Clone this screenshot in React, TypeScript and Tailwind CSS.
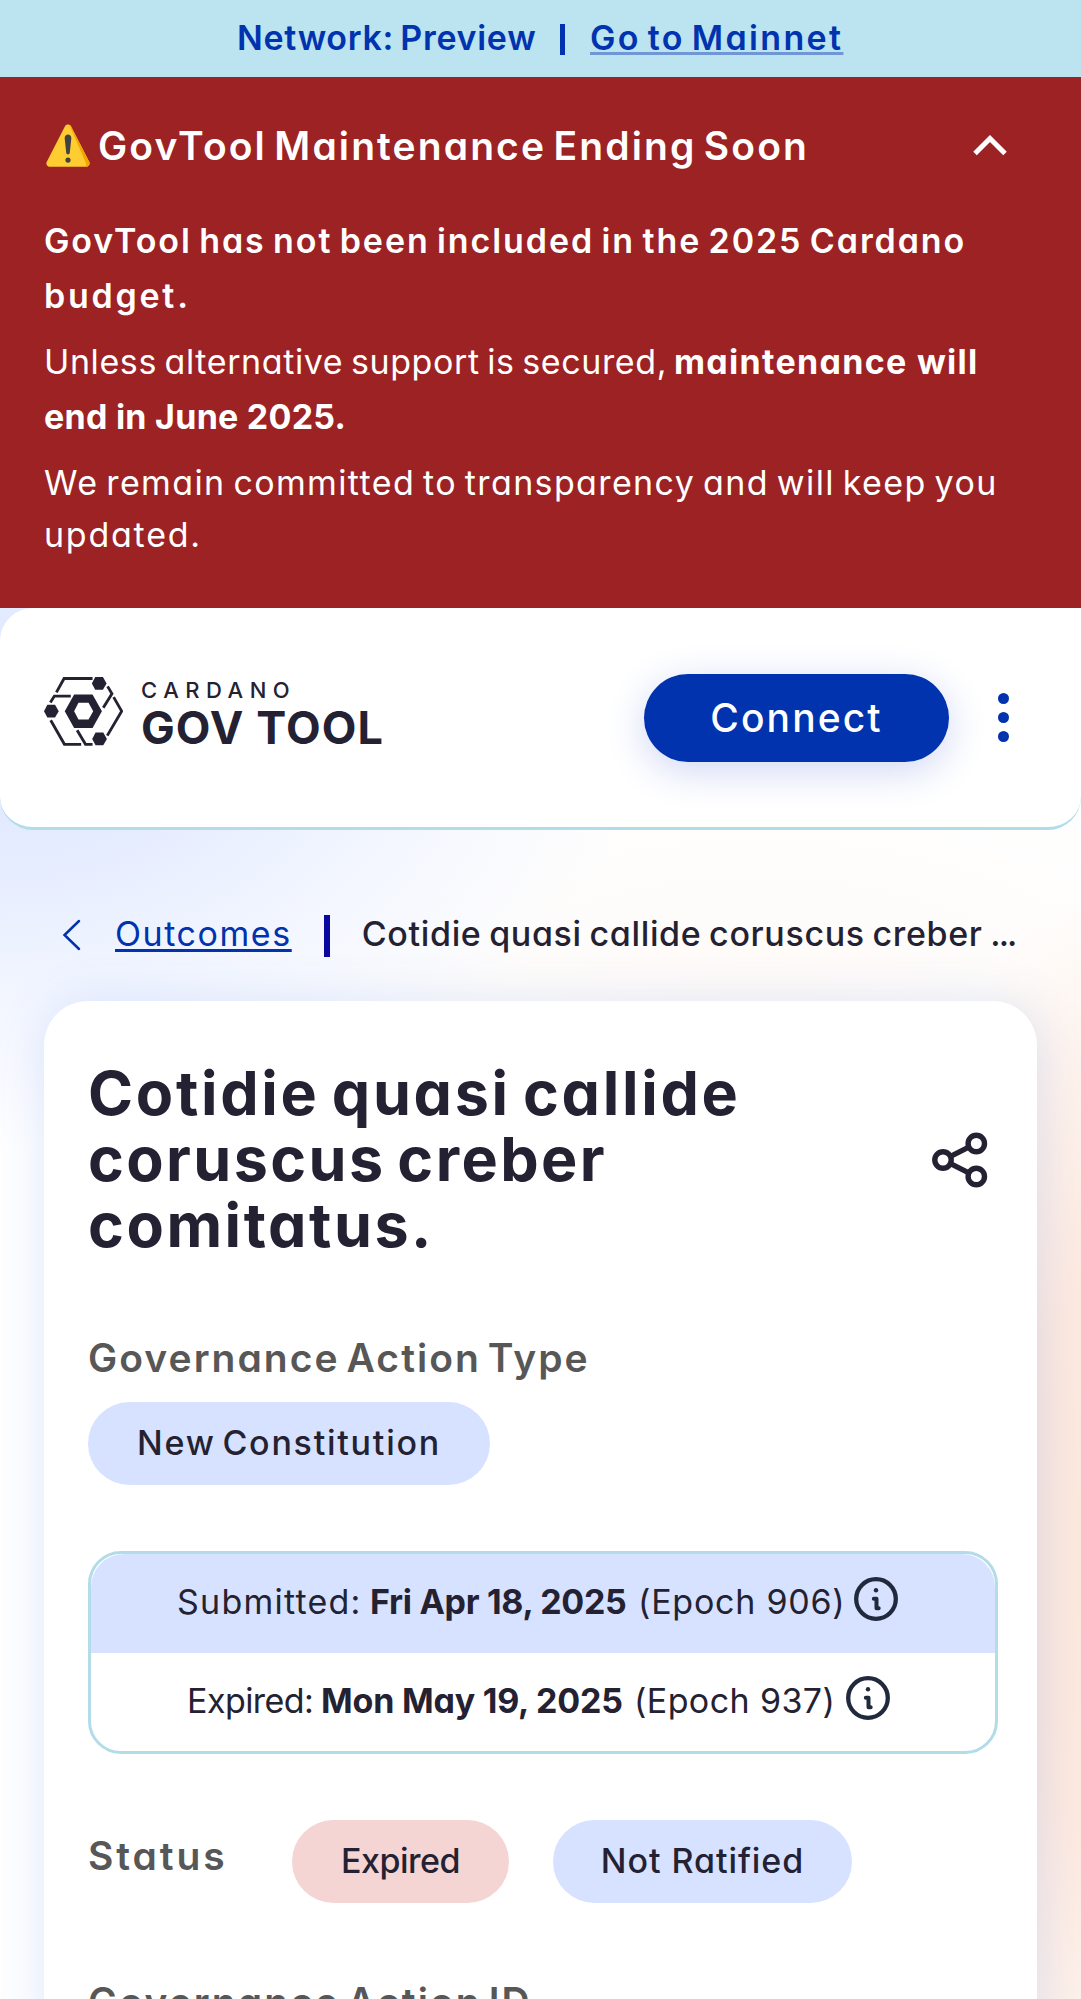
import type { ReactNode } from "react";

function WarningIcon() {
  return (
    <svg width="48" height="46" viewBox="0 0 46 44" fill="none">
      <path d="M20 3.2c1.3-2.3 4.700-2.300 6 0l17.300 34c1.200 2.200-.3 4.800-2.900 4.800H5.600c-2.600 0-4.100-2.600-2.900-4.800z" fill="#ffcc32" />
      <path d="M24.500 1.800c.6.300 1.100.800 1.500 1.400l17.300 34c1.200 2.200-.3 4.800-2.900 4.800h-2.200c2 0 2.800-2 1.800-4z" fill="#f2a600" />
      <path d="M19.800 14.500c0-4.700 6.400-4.700 6.400 0l-1.500 14c-.2 2.200-3.200 2.200-3.400 0z" fill="#424242" />
      <circle cx="23" cy="35.500" r="2.500" fill="#424242" />
    </svg>
  );
}

function Hexagon({ cx, cy }: { cx: number; cy: number }) {
  return (
    <path
      transform={`translate(${cx} ${cy})`}
      d="M-22 0L-12 -19H11L22 0L11 19H-12Z"
      fill="#242232"
    />
  );
}

function LogoMark() {
  return (
    <svg width="79" height="69" viewBox="0 0 236 206" fill="none">
      <g stroke="#242232" strokeWidth="8.500">
        <path d="M37 46L60 4.500H145" />
        <path d="M19 76L31 57H80" />
        <path d="M190 28L203 50L177 92" />
        <path d="M208 60L232 102L189 175" />
        <path d="M20 129L61 201H111" />
        <path d="M99 159L124 201H145" />
      </g>
      <path
        fillRule="evenodd"
        d="M62 102L90 52H145L173 102L145 152H90ZM90 102L103 127H133L147 102L133 77H103Z"
        fill="#242232"
      />
      <Hexagon cx={165} cy={19} />
      <Hexagon cx={22} cy={102} />
      <Hexagon cx={166} cy={185} />
    </svg>
  );
}

function InfoIcon() {
  return (
    <svg width="44" height="44" viewBox="0 0 44 44" fill="none" stroke="#212a3d">
      <circle cx="22" cy="22" r="19.800" strokeWidth="4.300" />
      <path d="M19.800 21.800H22.500V31.200H24.700" strokeWidth="4" strokeLinecap="round" strokeLinejoin="round" />
      <circle cx="22" cy="13.300" r="2.200" fill="#212a3d" stroke="none" />
    </svg>
  );
}

function ShareIcon() {
  return (
    <svg width="56" height="56" viewBox="0 0 56 56" fill="none" stroke="#242232" strokeWidth="5.400">
      <circle cx="11" cy="28" r="8.200" />
      <circle cx="44.300" cy="11.500" r="8.200" />
      <circle cx="44.300" cy="44.500" r="8.200" />
      <path d="M18.500 24.300L36.800 15.200M18.500 31.700L36.800 40.800" />
    </svg>
  );
}

function Pill({ className, children }: { className: string; children: ReactNode }) {
  return (
    <div className={`flex h-[83px] items-center justify-center rounded-full pb-[1px] text-[34px] font-medium ${className}`}>
      {children}
    </div>
  );
}

function DateRow({ className, children }: { className: string; children: ReactNode }) {
  return <div className={`flex items-center text-[34px] ${className}`}>{children}</div>;
}

export default function App() {
  return (
    <div className="flex h-[1999px] w-[1081px] flex-col overflow-hidden bg-white bg-[radial-gradient(ellipse_640px_430px_at_0px_720px,#dee6ff_0%,#e6edff_35%,#f4f7ff_68%,#ffffff00_100%),radial-gradient(ellipse_320px_680px_at_1150px_1560px,#fde8db_0%,#feeae0_45%,#fff3ec_75%,#ffffff00_100%),radial-gradient(ellipse_600px_300px_at_760px_1040px,#fefaf7_0%,#ffffff00_100%)] font-[Inter,sans-serif] leading-none whitespace-nowrap text-[#242232] [font-feature-settings:'cv11']">
      <div className="flex h-[77px] shrink-0 items-center bg-[#bbe3f0] pb-[1px] pl-[237px] text-[34px] font-semibold text-[#0033ad]">
        <span className="w-[323px] tracking-[0.7px] [word-spacing:-3px]">Network: Preview</span>
        <span className="mt-[2px] h-[31px] w-[5px] bg-[#0033ad]" />
        <a className="ml-[25px] tracking-[2.35px] underline decoration-[#6f97d6] decoration-[3px] underline-offset-[2px] [text-decoration-skip-ink:none] [word-spacing:-4px]">Go to Mainnet</a>
      </div>

      <section className="flex h-[531px] shrink-0 flex-col bg-[#9c2224] px-[44px] pt-[39px] text-white">
        <div className="flex h-[60px] items-center">
          <WarningIcon />
          <h2 className="mb-[1px] ml-[6px] text-[39px] font-semibold tracking-[2.1px] [word-spacing:-4.5px]">GovTool Maintenance Ending Soon</h2>
          <svg className="mr-[30px] mb-[2px] ml-auto" width="34" height="22" viewBox="0 0 34 22" fill="none" stroke="white" strokeWidth="5">
            <path d="M2 19.500L17 4.500L32 19.500" />
          </svg>
        </div>
        <p className="mt-[37px] text-[34px] leading-[55px] font-semibold">
          <span className="tracking-[1.9px] [word-spacing:-3px]">GovTool has not been included in the 2025 Cardano</span>
          <br />
          <span className="tracking-[2.75px]">budget.</span>
        </p>
        <p className="mt-[11px] text-[34px] leading-[55px]">
          <span className="inline-block w-[630px] tracking-[0.6px] [word-spacing:-2.5px]">Unless alternative support is secured,</span>
          <b className="font-bold tracking-[1.3px]">maintenance will</b>
          <br />
          <b className="font-bold tracking-[0.25px]">end in June 2025.</b>
        </p>
        <p className="mt-[13px] text-[34px] leading-[52px]">
          <span className="tracking-[1.37px] [word-spacing:-3px]">We remain committed to transparency and will keep you</span>
          <br />
          <span className="tracking-[1.76px]">updated.</span>
        </p>
      </section>

      <header className="flex h-[222px] shrink-0 items-center rounded-[33px] border-b-3 border-[#b2dce8] bg-white pl-[44px]">
        <div className="mb-[13px] flex h-[69px]">
          <LogoMark />
          <div className="ml-[18px]">
            <div className="text-[22px] leading-[26px] font-medium tracking-[6.5px]">CARDANO</div>
            <div className="mt-[2px] text-[45px] leading-[45px] font-[650] tracking-[1.1px]">GOV TOOL</div>
          </div>
        </div>
        <button className="mr-[49px] ml-auto flex h-[88px] w-[305px] items-center justify-center rounded-full bg-[#0033ad] text-[39px] font-medium tracking-[2.1px] text-white shadow-[0_9px_40px_#d0d8f4]">
          Connect
        </button>
        <div className="mr-[72px] flex w-[11px] flex-col gap-[8px]">
          <span className="size-[11px] rounded-full bg-[#0033ad]" />
          <span className="size-[11px] rounded-full bg-[#0033ad]" />
          <span className="size-[11px] rounded-full bg-[#0033ad]" />
        </div>
      </header>

      <nav className="mt-[79px] flex h-[50px] shrink-0 items-center pl-[62px] text-[34px]">
        <svg className="mt-[2px]" width="19" height="32" viewBox="0 0 19 32" fill="none" stroke="#0033ad" strokeWidth="2.500" strokeLinecap="round">
          <path d="M17 2L2.500 16L17 30" />
        </svg>
        <a className="ml-[34px] tracking-[1.56px] text-[#0033ad] underline decoration-[3px] underline-offset-[3px] [text-decoration-skip-ink:none]">Outcomes</a>
        <span className="mt-[4px] ml-[32px] h-[42px] w-[6px] bg-[#0a08a0]" />
        <span className="ml-[32px] font-medium tracking-[0.65px] [word-spacing:-2px]">Cotidie quasi callide coruscus creber <span className="tracking-[-2px]">...</span></span>
      </nav>

      <main className="mx-[44px] mt-[42px] h-[1200px] shrink-0 rounded-[44px] bg-white px-[44px] pt-[59px] shadow-[2px_4px_52px_rgba(47,98,220,0.17)]">
        <div className="flex items-center justify-between">
          <h1 className="text-[61px] leading-[66px] font-[650]">
            <span className="tracking-[2.7px] [word-spacing:-5px]">Cotidie quasi callide</span>
            <br />
            <span className="tracking-[2.4px] [word-spacing:-5px]">coruscus creber</span>
            <br />
            <span className="tracking-[2.55px]">comitatus.</span>
          </h1>
          <div className="mt-[2px] mr-[5px]">
            <ShareIcon />
          </div>
        </div>

        <h3 className="mt-[77px] text-[39px] leading-[46px] font-semibold tracking-[2.05px] [word-spacing:-5px] text-[#575757]">Governance Action Type</h3>
        <Pill className="mt-[21px] w-[402px] bg-[#d6e2ff] tracking-[1.75px] [word-spacing:-4px]">New Constitution</Pill>

        <div className="mt-[66px] h-[203px] w-[910px] rounded-[33px] border-3 border-[#b2dce8]">
          <DateRow className="h-[99px] rounded-t-[33px] bg-[#d6e2ff] pb-[3px] pl-[86px]">
            <span className="w-[193px] tracking-[1.23px]">Submitted:</span>
            <b className="w-[268px] font-bold tracking-[-0.3px]">Fri Apr 18, 2025</b>
            <span className="w-[216px] tracking-[0.75px]">(Epoch 906)</span>
            <span className="mb-[6px]"><InfoIcon /></span>
          </DateRow>
          <DateRow className="h-[98px] pb-[2px] pl-[96px]">
            <span className="w-[134px] tracking-[-0.56px]">Expired:</span>
            <b className="w-[313px] font-bold tracking-[-0.2px]">Mon May 19, 2025</b>
            <span className="w-[212px] tracking-[0.4px]">(Epoch 937)</span>
            <span className="mb-[6px]"><InfoIcon /></span>
          </DateRow>
        </div>

        <div className="mt-[66px] flex h-[83px] items-center">
          <h3 className="w-[204px] pb-[12px] text-[39px] font-semibold tracking-[2.9px] text-[#575757]">Status</h3>
          <Pill className="w-[217px] bg-[#f5d5d3] tracking-[-0.47px]">Expired</Pill>
          <Pill className="ml-[44px] w-[299px] bg-[#d6e2ff] tracking-[0.94px]">Not Ratified</Pill>
        </div>

        <h3 className="mt-[76px] text-[39px] leading-[46px] font-semibold tracking-[2.1px] [word-spacing:-5px] text-[#575757]">Governance Action ID</h3>
      </main>
    </div>
  );
}
